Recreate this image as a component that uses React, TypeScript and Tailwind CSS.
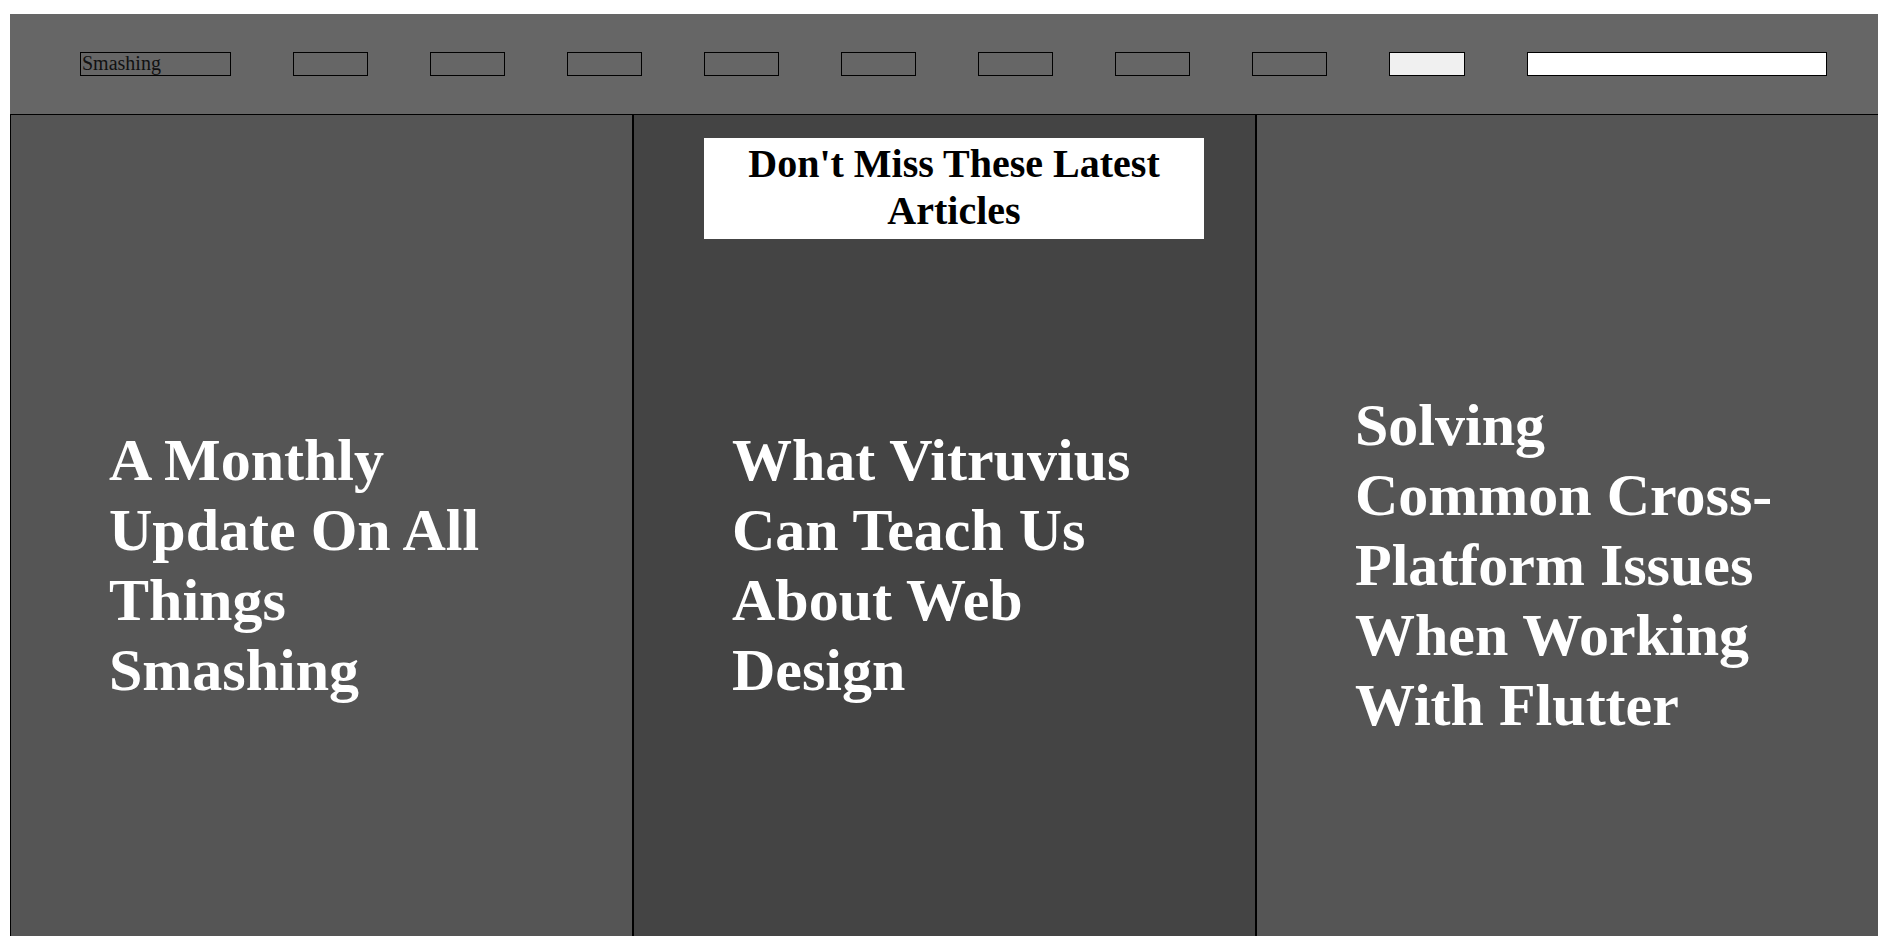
import React from 'react';

const serif = { fontFamily: '"Liberation Serif", "Times New Roman", serif' };

const navSlots = [1, 2, 3, 4, 5, 6, 7, 8];

const articles = [
  { title: 'A Monthly Update On All Things Smashing', bg: 'bg-[#555555]' },
  { title: 'What Vitruvius Can Teach Us About Web Design', bg: 'bg-[#444444]', banner: true },
  { title: 'Solving Common Cross-Platform Issues When Working With Flutter', bg: 'bg-[#555555]' },
];

export default function App() {
  return (
    <div className="w-[1878px] h-[936px] overflow-hidden bg-white" style={serif}>
      <div className="ml-[10px] mt-[14px] w-[1869px]">
        {/* Top nav */}
        <header className="h-[100px] bg-[#666666] flex items-center gap-[62px] pl-[70px]">
          <div className="w-[151px] h-[24px] border border-black text-[20px] leading-[21px] text-[#111] pl-[1px] overflow-hidden">
            Smashing
          </div>
          {navSlots.map((n) => (
            <div key={n} className="w-[75px] h-[24px] border border-black" />
          ))}
          <button type="button" className="w-[76px] h-[24px] border border-black bg-[#f0f0f0]" />
          <input type="text" className="w-[300px] h-[24px] border border-black bg-white outline-none" />
        </header>

        {/* Article columns */}
        <div className="flex">
          {articles.map((a, i) => (
            <section
              key={i}
              className={`w-[623px] h-[902px] shrink-0 border border-black ${i > 0 ? '-ml-[0px]' : ''} ${a.bg} grid`}
            >
              {a.banner && (
                <div className="col-start-1 row-start-1 self-start mt-[23px] ml-[70px] w-[500px] bg-white text-black font-bold text-[40px] leading-[47px] text-center pt-[2px] pb-[5px]">
                  Don't Miss These Latest Articles
                </div>
              )}
              <h2 className="col-start-1 row-start-1 self-center px-[98px] text-white font-bold text-[60px] leading-[70px]">
                {a.title}
              </h2>
            </section>
          ))}
        </div>
      </div>
    </div>
  );
}
